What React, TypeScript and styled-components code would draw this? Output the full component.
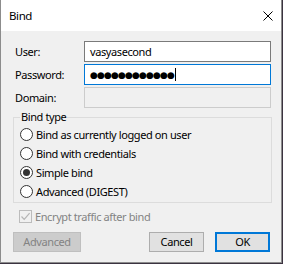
import styled, { createGlobalStyle } from 'styled-components';

const GlobalStyle = createGlobalStyle`
	html, body {
		margin: 0;
		padding: 0;
		background: #3b3340;
	}
	body {
		font-family: "Noto Sans", "Open Sans", sans-serif;
		font-size: 11px;
		letter-spacing: -0.4px;
		color: #000;
	}
`

type BoxState = 'normal' | 'focused' | 'disabled';

const bindTypes = [
	'Bind as currently logged on user',
	'Bind with credentials',
	'Simple bind',
	'Advanced (DIGEST)',
];

export default function App() {
	const selected = 2;
	const password = 'x'.repeat(12);

	return (
		<>
			<GlobalStyle />
			<Window>
				<TitleBar>
					<Title>Bind</Title>
					<CloseButton aria-label='Close'>
						<svg width='10' height='10' viewBox='0 0 10 10'>
							<path d='M0.5 0.5 L9.5 9.5 M9.5 0.5 L0.5 9.5' stroke='#000' strokeWidth='1' fill='none' />
						</svg>
					</CloseButton>
				</TitleBar>
				<Body>
					<Fields>
						<Label>User:</Label>
						<TextBox $state='normal'>vasyasecond</TextBox>
						<Label>Password:</Label>
						<TextBox $state='focused'>
							{password.split('').map((_, i) => <PasswordChar key={i}>●</PasswordChar>)}
							<Caret />
						</TextBox>
						<Label>Domain:</Label>
						<TextBox $state='disabled' />
					</Fields>

					<GroupBox>
						<Legend>Bind type</Legend>
						{bindTypes.map((text, i) => (
							<RadioRow key={text}>
								<Radio $checked={i === selected} />
								<span>{text}</span>
							</RadioRow>
						))}
					</GroupBox>

					<CheckRow>
						<CheckBox>
							<svg width='11' height='11' viewBox='0 0 11 11'>
								<path d='M1.5 5.5 L4.2 8.3 L9.6 2.2' stroke='#b4b4b4' strokeWidth='1.2' fill='none' />
							</svg>
						</CheckBox>
						<span>Encrypt traffic after bind</span>
					</CheckRow>

					<ButtonRow>
						<Button $disabled>Advanced</Button>
						<RightButtons>
							<Button>Cancel</Button>
							<Button $primary>OK</Button>
						</RightButtons>
					</ButtonRow>
				</Body>
			</Window>
		</>
	)
}

const Window = styled.div`
	width: 282px;
	height: 263px;
	box-sizing: border-box;
	border: 1px solid #8c8c8c;
	border-top: none;
	background: #f0f0f0;
	display: flex;
	flex-direction: column;
`

const TitleBar = styled.div`
	height: 31px;
	flex-shrink: 0;
	background: #fff;
	display: flex;
	align-items: center;
	justify-content: space-between;
	padding: 0 8px 0 8px;
`

const Title = styled.div`
	font-size: 11.5px;
	line-height: 16px;
`

const CloseButton = styled.div`
	width: 10px;
	height: 10px;
	display: flex;
	svg {
		display: block;
	}
`

const Body = styled.div`
	padding: 10px 9px 0 12px;
	display: flex;
	flex-direction: column;
`

const Fields = styled.div`
	display: grid;
	grid-template-columns: 71px 187px;
	grid-auto-rows: 21px;
	row-gap: 2px;
	align-items: center;
`

const Label = styled.div`
	padding-left: 2px;
	line-height: 16px;
`

const TextBox = styled.div<{ $state: BoxState }>`
	height: 21px;
	box-sizing: border-box;
	display: flex;
	align-items: center;
	padding-left: 5px;
	line-height: 16px;
	border: 1px solid ${({ $state }) =>
		$state === 'focused' ? '#0078d7' : $state === 'disabled' ? '#cccccc' : '#7a7a7a'};
	background: ${({ $state }) => ($state === 'disabled' ? '#f0f0f0' : '#fff')};
`

const PasswordChar = styled.span`
	display: inline-block;
	width: 7px;
	text-align: center;
	font-family: "DejaVu Sans", sans-serif;
	font-size: 9px;
	letter-spacing: 0;
	line-height: 12px;
`

const Caret = styled.span`
	display: inline-block;
	width: 1px;
	height: 13px;
	margin-left: 1px;
	background: #000;
`

const GroupBox = styled.fieldset`
	margin: 1px 0 0 0;
	padding: 0 6px 1px 6px;
	border: 1px solid #dcdcdc;
	min-width: 0;
`

const Legend = styled.legend`
	padding: 0 1px;
	margin-left: 0;
	line-height: 16px;
`

const RadioRow = styled.div`
	height: 19px;
	display: flex;
	align-items: center;
	gap: 3px;
	line-height: 16px;
`

const Radio = styled.span<{ $checked?: boolean }>`
	width: 13px;
	height: 13px;
	box-sizing: border-box;
	border: 1px solid #333;
	border-radius: 50%;
	background: #fff;
	flex-shrink: 0;
	display: flex;
	align-items: center;
	justify-content: center;

	&::after {
		content: '';
		width: 7px;
		height: 7px;
		border-radius: 50%;
		background: #333;
		display: ${({ $checked }) => ($checked ? 'block' : 'none')};
	}
`

const CheckRow = styled.div`
	margin-top: 5px;
	margin-left: 6px;
	height: 17px;
	display: flex;
	align-items: center;
	gap: 3px;
	color: #838383;
	line-height: 16px;
`

const CheckBox = styled.span`
	width: 13px;
	height: 13px;
	box-sizing: border-box;
	border: 1px solid #bcbcbc;
	background: #f0f0f0;
	display: flex;
	align-items: center;
	justify-content: center;
	svg {
		display: block;
	}
`

const ButtonRow = styled.div`
	margin-top: 7px;
	padding-right: 2px;
	display: flex;
	justify-content: space-between;
	align-items: center;
`

const RightButtons = styled.div`
	display: flex;
	gap: 11px;
`

const Button = styled.div<{ $primary?: boolean; $disabled?: boolean }>`
	height: 20px;
	min-width: 55px;
	padding: 0 6px;
	box-sizing: border-box;
	display: flex;
	align-items: center;
	justify-content: center;
	line-height: 16px;
	color: ${({ $disabled }) => ($disabled ? '#838383' : '#000')};
	background: ${({ $disabled }) => ($disabled ? '#cccccc' : '#e1e1e1')};
	border: ${({ $primary, $disabled }) =>
		$primary ? '2px solid #0078d7' : $disabled ? '1px solid #bfbfbf' : '1px solid #adadad'};
	${({ $disabled }) => $disabled && 'width: 68px;'}
`
